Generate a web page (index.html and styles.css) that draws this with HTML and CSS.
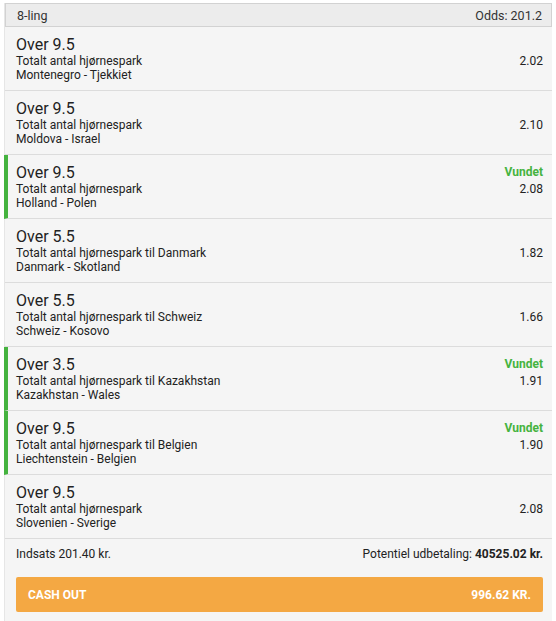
FILE: index.html
```html
<!DOCTYPE html>
<html lang="da">
<head>
  <meta charset="UTF-8">
  <title>Kupon - 8-ling</title>
  <link rel="stylesheet" href="styles.css">
</head>
<body>
<div class="slip">
  <div class="slip-head">
    <span>8-ling</span>
    <span>Odds: 201.2</span>
  </div>

  <div class="leg">
    <div class="leg-info">
      <div class="leg-title">Over 9.5</div>
      <div class="leg-market">Totalt antal hjørnespark</div>
      <div class="leg-match">Montenegro - Tjekkiet</div>
    </div>
    <div class="leg-side"><span class="leg-status"></span><span class="leg-odds">2.02</span></div>
  </div>

  <div class="leg">
    <div class="leg-info">
      <div class="leg-title">Over 9.5</div>
      <div class="leg-market">Totalt antal hjørnespark</div>
      <div class="leg-match">Moldova - Israel</div>
    </div>
    <div class="leg-side"><span class="leg-status"></span><span class="leg-odds">2.10</span></div>
  </div>

  <div class="leg won">
    <div class="leg-info">
      <div class="leg-title">Over 9.5</div>
      <div class="leg-market">Totalt antal hjørnespark</div>
      <div class="leg-match">Holland - Polen</div>
    </div>
    <div class="leg-side"><span class="leg-status">Vundet</span><span class="leg-odds">2.08</span></div>
  </div>

  <div class="leg">
    <div class="leg-info">
      <div class="leg-title">Over 5.5</div>
      <div class="leg-market">Totalt antal hjørnespark til Danmark</div>
      <div class="leg-match">Danmark - Skotland</div>
    </div>
    <div class="leg-side"><span class="leg-status"></span><span class="leg-odds">1.82</span></div>
  </div>

  <div class="leg">
    <div class="leg-info">
      <div class="leg-title">Over 5.5</div>
      <div class="leg-market">Totalt antal hjørnespark til Schweiz</div>
      <div class="leg-match">Schweiz - Kosovo</div>
    </div>
    <div class="leg-side"><span class="leg-status"></span><span class="leg-odds">1.66</span></div>
  </div>

  <div class="leg won">
    <div class="leg-info">
      <div class="leg-title">Over 3.5</div>
      <div class="leg-market">Totalt antal hjørnespark til Kazakhstan</div>
      <div class="leg-match">Kazakhstan - Wales</div>
    </div>
    <div class="leg-side"><span class="leg-status">Vundet</span><span class="leg-odds">1.91</span></div>
  </div>

  <div class="leg won">
    <div class="leg-info">
      <div class="leg-title">Over 9.5</div>
      <div class="leg-market">Totalt antal hjørnespark til Belgien</div>
      <div class="leg-match">Liechtenstein - Belgien</div>
    </div>
    <div class="leg-side"><span class="leg-status">Vundet</span><span class="leg-odds">1.90</span></div>
  </div>

  <div class="leg">
    <div class="leg-info">
      <div class="leg-title">Over 9.5</div>
      <div class="leg-market">Totalt antal hjørnespark</div>
      <div class="leg-match">Slovenien - Sverige</div>
    </div>
    <div class="leg-side"><span class="leg-status"></span><span class="leg-odds">2.08</span></div>
  </div>

  <div class="slip-foot">
    <div class="stake-row">
      <span>Indsats 201.40 kr.</span>
      <span>Potentiel udbetaling: <b>40525.02 kr.</b></span>
    </div>
    <button class="cashout">
      <span>CASH OUT</span>
      <span>996.62 KR.</span>
    </button>
  </div>
</div>
</body>
</html>
```

FILE: styles.css
```css
:root {
  --panel-bg: #f5f5f5;
  --line: #dcdcdc;
  --text: #222;
  --won: #45b33f;
  --orange: #f4a843;
}
* { box-sizing: border-box; }
body { margin: 0; background: #fff; font-family: Roboto, "Liberation Sans", sans-serif; color: var(--text); }
.slip { margin: 3px 4px 0 4px; width: 548px; min-height: 618px; background: var(--panel-bg); border-left: 1px solid #e6e6e6; }
.slip-head { height: 24px; display: flex; justify-content: space-between; align-items: center; padding: 0 9px 0 11px; background: #ececec; border: 1px solid #d2d2d2; font-size: 12.5px; color: #333; }
.leg { height: 64px; display: flex; justify-content: space-between; padding: 8px 9px 0 11px; border-bottom: 1px solid var(--line); }
.leg.won { border-left: 4px solid var(--won); padding-left: 8px; margin-left: -1px; }
.leg-title { font-size: 16px; line-height: 19px; }
.leg-market, .leg-match { font-size: 12px; line-height: 14px; }
.leg-side { display: flex; flex-direction: column; align-items: flex-end; padding-top: 2px; }
.leg-status { height: 17px; font-size: 12px; font-weight: 700; color: var(--won); }
.leg-odds { font-size: 12px; line-height: 14px; }
.slip-foot { padding: 8px 9px 10px 11px; }
.stake-row { display: flex; justify-content: space-between; font-size: 12px; line-height: 14px; }
.stake-row b { font-weight: 700; }
.cashout { margin-top: 16px; width: 100%; height: 35px; display: flex; justify-content: space-between; align-items: center; padding: 0 12px; background: var(--orange); border: none; border-radius: 2px; color: #fff; font-family: inherit; font-size: 12px; font-weight: 700; }
```
